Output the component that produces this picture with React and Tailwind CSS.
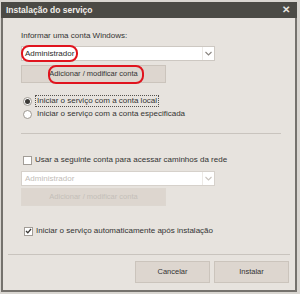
const font = { fontFamily: '"Liberation Sans", Arial, sans-serif' };

function Chevron({ color = "#8a8580" }) {
  return (
    <svg width="7" height="5" viewBox="0 0 7 5">
      <path d="M0.5 1 L3.5 4 L6.5 1" fill="none" stroke={color} strokeWidth="1.1" />
    </svg>
  );
}

function Select({ value, disabled, highlight }) {
  return (
    <div className={`relative flex h-[15px] w-[194px] items-stretch border ${disabled ? "border-[#d6d1cb]" : "border-[#cdc8c2]"} bg-white`}>
      <div className={`flex flex-1 items-center pl-[3px] text-[8px] ${disabled ? "text-[#c2bdb7]" : "text-[#2b2b2b]"}`}>{value}</div>
      <div className="flex w-[12px] items-center justify-center border-l border-[#ece9e5]">
        <Chevron color={disabled ? "#c9c4be" : "#8a8580"} />
      </div>
      {highlight && (
        <div className="absolute left-[-1px] top-[-2px] h-[17px] w-[57px] rounded-[8px] border-2 border-[#e0141e]" />
      )}
    </div>
  );
}

function Button({ label, disabled, highlight, className = "" }) {
  return (
    <div className={`relative flex items-center justify-center border ${disabled ? "border-[#ddd7d0] text-[#c4bfb9]" : "border-[#cbc4bc] text-[#333]"} bg-[#ddd6cf] text-[7.5px] ${className}`}>
      {label}
      {highlight && (
        <div className="absolute left-[26px] top-[-1px] h-[19px] w-[96px] rounded-[8px] border-2 border-[#e0141e]" />
      )}
    </div>
  );
}

function Radio({ checked }) {
  return (
    <div className="flex h-[9px] w-[9px] items-center justify-center rounded-full border border-[#9d9891] bg-white">
      {checked && <div className="h-[5px] w-[5px] rounded-full bg-[#3d3b38]" />}
    </div>
  );
}

function Checkbox({ checked }) {
  return (
    <div className="flex h-[9px] w-[9px] items-center justify-center border border-[#a29d97] bg-white">
      {checked && (
        <svg width="7" height="6" viewBox="0 0 7 6">
          <path d="M1 3 L2.8 4.8 L6 1" fill="none" stroke="#3a3835" strokeWidth="1.3" />
        </svg>
      )}
    </div>
  );
}

export default function App() {
  return (
    <div className="h-[294px] w-[300px] bg-[#d9d6d1] pl-[1px] pt-[2px]" style={font}>
      <div className="flex h-[290px] w-[296px] flex-col bg-[#e7e3de] border-x-2 border-b-2 border-[#75726d]">
        <div className="flex h-[16px] items-center justify-between bg-[#4b4a45] pl-[5px] pr-[7px] -mx-[2px]">
          <span className="text-[8.5px] font-bold text-[#f2efea]">Instalação do serviço</span>
          <span className="text-[10px] font-bold leading-none text-[#e8e5e0]">✕</span>
        </div>
        <div className="flex flex-col pl-[18px]">
          <div className="mt-[12px] text-[8px] leading-[12px] text-[#333]">Informar uma conta Windows:</div>
          <div className="mt-[4px]">
            <Select value="Administrador" highlight />
          </div>
          <Button label="Adicionar / modificar conta" highlight className="mt-[4px] h-[18px] w-[145px]" />
          <div className="mt-[12px] flex items-center gap-[3px] pl-[2px] text-[8px] text-[#333]">
            <Radio checked />
            <span className="border border-dotted border-[#55524e] px-[1px] leading-[10px]">Iniciar o serviço com a conta local</span>
          </div>
          <div className="mt-[1px] flex items-center gap-[3px] pl-[2px] text-[8px] text-[#333]">
            <Radio />
            <span className="px-[2px] leading-[12px]">Iniciar o serviço com a conta especificada</span>
          </div>
          <div className="mt-[13px] h-[1px] w-[260px] bg-[#c9c4be]" />
          <div className="mt-[20px] flex items-center gap-[3px] pl-[2px] text-[8px] text-[#333]">
            <Checkbox />
            <span className="leading-[12px]">Usar a seguinte conta para acessar caminhos da rede</span>
          </div>
          <div className="mt-[5px]">
            <Select value="Administrador" disabled />
          </div>
          <Button label="Adicionar / modificar conta" disabled className="mt-[2px] h-[18px] w-[145px]" />
          <div className="mt-[19px] flex items-center gap-[3px] pl-[3px] text-[8px] text-[#333]">
            <Checkbox checked />
            <span className="leading-[12px]">Iniciar o serviço automaticamente após instalação</span>
          </div>
        </div>
        <div className="mx-[5px] mt-[17px] h-[1px] bg-[#c9c4be]" />
        <div className="mt-[6px] flex justify-end gap-[4px] pr-[6px]">
          <Button label="Cancelar" className="h-[22px] w-[75px]" />
          <Button label="Instalar" className="h-[22px] w-[75px]" />
        </div>
      </div>
    </div>
  );
}
